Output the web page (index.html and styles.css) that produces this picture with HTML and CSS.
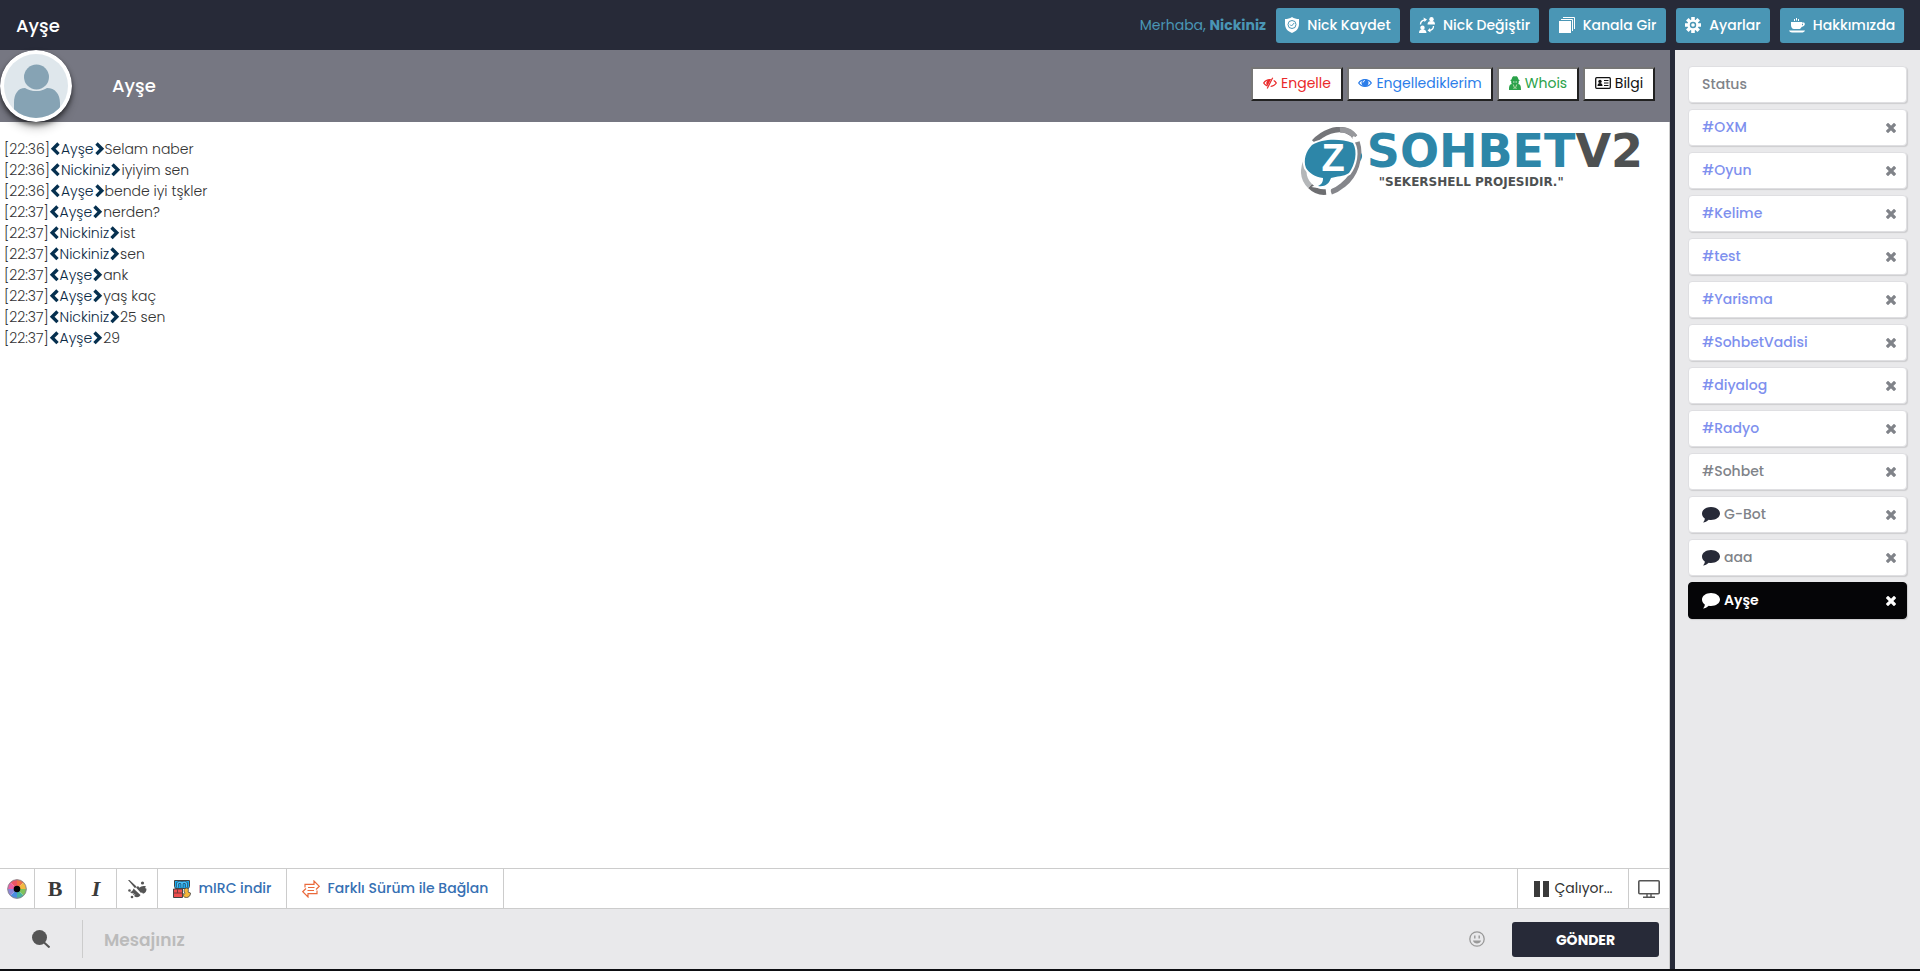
FILE: index.html
```html
<!DOCTYPE html>
<html lang="tr">
<head>
<meta charset="utf-8">
<title>Ayşe</title>
<link rel="stylesheet" href="styles.css">
</head>
<body>
<svg class="defs" aria-hidden="true">
  <symbol id="close" viewBox="0 0 10 10"><path d="M2 2l6 6M8 2l-6 6" stroke="currentColor" stroke-width="3.200" stroke-linecap="square" fill="none"/></symbol>
  <symbol id="bubble" viewBox="0 0 18 16"><path d="M9 0c5 0 9 2.900 9 6.500S14 13 9 13c-.8 0-1.500-.1-2.200-.2C5 14.500 3 15.300 1 15.500c1.300-1.300 1.800-2.500 1.800-4C1 10.300 0 8.500 0 6.500 0 2.900 4 0 9 0z" fill="currentColor"/></symbol>
  <symbol id="left" viewBox="0 0 11 14"><path d="M8.500 1.500l-5.300 5.300 5.300 5.300" stroke="currentColor" stroke-width="3.400" fill="none"/></symbol>
  <symbol id="right" viewBox="0 0 11 14"><path d="M2.500 1.500l5.300 5.300-5.300 5.300" stroke="currentColor" stroke-width="3.400" fill="none"/></symbol>
</svg>
<div class="app">
  <header class="topbar">
    <h1 class="topbar-title">Ayşe</h1>
    <p class="greeting">Merhaba, <b>Nickiniz</b></p>
    <nav class="topnav">
      <button class="nav-btn w-register"><svg width="14" height="16" viewBox="1 0 14 16"><path d="M8 0c2 1.500 4.500 2 7 2v5c0 4.500-3 7.500-7 9-4-1.500-7-4.500-7-9V2c2.500 0 5-.5 7-2z" fill="#fff"/><circle cx="8" cy="7.500" r="4" fill="none" stroke="#4a96b5"/><path d="M6 7.500l1.500 1.500 2.700-3" fill="none" stroke="#4a96b5"/></svg>Nick Kaydet</button>
      <button class="nav-btn w-change"><svg width="16" height="16" viewBox="0 0 16 16"><g fill="#fff"><circle cx="12.500" cy="2.200" r="2.200"/><path d="M8.500 7.500c0-2.500 1.500-3.500 4-3.500S16 5 16 7.500z"/><circle cx="3.500" cy="10.700" r="2.200"/><path d="M0 16c0-2.500 1-3.500 3.500-3.500S7.500 13.500 7.500 16zM4.500.5L8 2.500 5.500 5zM11.500 15.500L8.500 13.500 11 11z"/></g><path d="M1.500 7.500c0-2.500 1.500-4 4-4.500M14.500 9c0 2.500-1.500 4-4 4.500" fill="none" stroke="#fff" stroke-width="1.300"/></svg>Nick Değiştir</button>
      <button class="nav-btn w-join"><svg width="16" height="16" viewBox="0 0 16 16"><path d="M0 4h12v12H0z" fill="#fff"/><path d="M2 2.500h11.500V14M4 .5h11.500V12" fill="none" stroke="#fff"/></svg>Kanala Gir</button>
      <button class="nav-btn w-settings"><svg width="16" height="16" viewBox="0 0 16 16"><g stroke="#fff" stroke-width="3.600"><path d="M8 0v16M0 8h16M2.300 2.300l11.400 11.400M13.700 2.300L2.300 13.700"/></g><circle cx="8" cy="8" r="5.500" fill="#fff"/><circle cx="8" cy="8" r="2.500" fill="none" stroke="#4a96b5" stroke-width="1.400"/></svg>Ayarlar</button>
      <button class="nav-btn w-about"><svg width="16" height="16" viewBox="0 0 16 16"><path d="M2 5h11v.5h1.500c2 0 2 4-2 4.500C12 11.500 11 12 10 12H5C3 12 2 10 2 8zM0 13.500h16c-.5 1.500-2 2-3 2H3c-1.500 0-2.500-.7-3-2z" fill="#fff"/><path d="M5.500 4V2M7.500 3.500V1M9.500 4V2" stroke="#fff"/><path d="M13 6.700h1v1l-1 .8z" fill="#4a96b5"/></svg>Hakkımızda</button>
    </nav>
  </header>
  <div class="body">
    <main class="chat">
      <section class="profile">
        <svg class="avatar" viewBox="0 0 72 72"><defs><clipPath id="face"><circle cx="36" cy="36" r="32"/></clipPath></defs><circle cx="36" cy="36" r="36" fill="#fff"/><circle cx="36" cy="36" r="32" fill="#dfe7ec"/><g clip-path="url(#face)" fill="#86a3b4"><path d="M14 72V53c0-9 4-15 11-15 6 4 16 4 22 0 8 0 13 6 13 15v19z"/><circle cx="36.500" cy="27" r="14" fill="#dfe7ec"/><circle cx="36.500" cy="27" r="12.500"/></g></svg>
        <h2 class="profile-name">Ayşe</h2>
        <div class="actions">
          <button class="act red w-block"><svg width="14" height="12" viewBox="0 0 14 12"><path d="M.7 6C3.500 1.500 10.500 1.500 13.300 6 10.500 10.500 3.500 10.500.7 6z" fill="none" stroke="currentColor" stroke-width="1.300"/><path d="M7 2.800A3.200 3.200 0 0 0 5.500 9L9 3.200z" fill="currentColor"/><path d="M10.500.5L5 11.500" stroke="#fff" stroke-width="3"/><path d="M9.700.7L4.200 11.500" stroke="currentColor" stroke-width="1.200"/></svg>Engelle</button>
          <button class="act blue w-blocked"><svg width="14" height="12" viewBox="0 0 14 12"><path d="M.7 6C3.500 1.500 10.500 1.500 13.300 6 10.500 10.500 3.500 10.500.7 6z" fill="none" stroke="currentColor" stroke-width="1.300"/><circle cx="7" cy="5.700" r="3.500" fill="currentColor"/><path d="M5 5.500A2 2 0 0 1 7 3.500" fill="none" stroke="#fff" stroke-width=".9"/></svg>Engellediklerim</button>
          <button class="act green w-whois"><svg width="12" height="14" viewBox="0 0 12 14"><path d="M3 2C3.500.5 4.500 0 6 .5 7.500 0 8.500.5 9 2l.5 1.500 1.500.7-1.300.8c.3 1.500-.2 2.500-.5 3C11.500 8.500 12 10 12 14H0C0 10 .5 8.500 2.800 8c-.3-.5-.8-1.500-.5-3L1 4.200l1.500-.7z" fill="currentColor"/><path d="M4 6h1.500M6.500 6H8" stroke="#fff" stroke-width=".8"/><path d="M4.300 8.500L5.500 12l-1 1M7.700 8.500L6.500 12l1 1" fill="none" stroke="#d8e9c0" stroke-width=".8"/></svg>Whois</button>
          <button class="act black w-info"><svg width="16" height="12" viewBox="0 0 16 12"><rect x=".7" y=".7" width="14.600" height="10.600" rx="1" fill="none" stroke="currentColor" stroke-width="1.300"/><circle cx="5" cy="4.400" r="1.700" fill="currentColor"/><path d="M2.500 9c0-2 1-3 2.500-3s2.500 1 2.500 3z" fill="currentColor"/><path d="M9 3.500h4.500M9 6h4.500M9 8.500h4.500" stroke="currentColor" stroke-width="1.200"/></svg>Bilgi</button>
        </div>
      </section>
      <section class="log">
        <ul class="messages">
          <li>[22:36]<span class="nick"><svg><use href="#left"/></svg>Ayşe<svg><use href="#right"/></svg></span>Selam naber</li>
          <li>[22:36]<span class="nick"><svg><use href="#left"/></svg>Nickiniz<svg><use href="#right"/></svg></span>iyiyim sen</li>
          <li>[22:36]<span class="nick"><svg><use href="#left"/></svg>Ayşe<svg><use href="#right"/></svg></span>bende iyi tşkler</li>
          <li>[22:37]<span class="nick"><svg><use href="#left"/></svg>Ayşe<svg><use href="#right"/></svg></span>nerden?</li>
          <li>[22:37]<span class="nick"><svg><use href="#left"/></svg>Nickiniz<svg><use href="#right"/></svg></span>ist</li>
          <li>[22:37]<span class="nick"><svg><use href="#left"/></svg>Nickiniz<svg><use href="#right"/></svg></span>sen</li>
          <li>[22:37]<span class="nick"><svg><use href="#left"/></svg>Ayşe<svg><use href="#right"/></svg></span>ank</li>
          <li>[22:37]<span class="nick"><svg><use href="#left"/></svg>Ayşe<svg><use href="#right"/></svg></span>yaş kaç</li>
          <li>[22:37]<span class="nick"><svg><use href="#left"/></svg>Nickiniz<svg><use href="#right"/></svg></span>25 sen</li>
          <li>[22:37]<span class="nick"><svg><use href="#left"/></svg>Ayşe<svg><use href="#right"/></svg></span>29</li>
        </ul>
        <div class="logo">
          <svg class="logo-mark" width="62" height="68" viewBox="0 0 62 68">
            <g fill="none" stroke-width="5.500">
              <path d="M13 15C22 5 36 0 46 4q5 2 8 6" stroke="#747579"/>
              <path d="M39 3q10-1 15 7" stroke="#97989c"/>
              <path d="M56 15c5 15-2 34-14 43q-6 5-12 7" stroke="#85868b"/>
              <path d="M25 65q-9 1-16-6" stroke="#6d6e71"/>
              <path d="M9 59C2 52 1 44 5 34" stroke="#b4b7b9"/>
            </g>
            <path d="M52 10l4 4M27 67l3-8" stroke="#fff" stroke-width="2.500"/>
            <path d="M60 26c2 2 1 6-1 8z" fill="#2d86a8"/>
            <path d="M11 18c10-6 27-7 41-2 5 9 2 22-4 30-6 4-12 3-18 5-2 6-6 9-13 8 4-2 5-4 5-8-8-1-14-5-17-10-3-8 0-17 6-23z" fill="#2d86a8" stroke="#fff" stroke-width="4" paint-order="stroke"/>
            <text x="32" y="44" text-anchor="middle" class="logo-letter">Z</text>
          </svg>
          <div class="logo-words">
            <div class="logo-name">SOHBET<span>V2</span></div>
            <div class="logo-tag">"SEKERSHELL PROJESIDIR."</div>
          </div>
        </div>
      </section>
      <div class="toolbar">
        <button class="tool color" aria-label="Renk"><svg width="20" height="20" viewBox="0 0 20 20"><g stroke-width="7" fill="none"><circle cx="10" cy="10" r="6" stroke="#7ec25a" pathLength="8" stroke-dasharray="1 7"/><circle cx="10" cy="10" r="6" stroke="#47b39d" pathLength="8" stroke-dasharray="1 7" stroke-dashoffset="-1"/><circle cx="10" cy="10" r="6" stroke="#4b8ee0" pathLength="8" stroke-dasharray="1 7" stroke-dashoffset="-2"/><circle cx="10" cy="10" r="6" stroke="#8a86d8" pathLength="8" stroke-dasharray="1 7" stroke-dashoffset="-3"/><circle cx="10" cy="10" r="6" stroke="#ea5fa4" pathLength="8" stroke-dasharray="1 7" stroke-dashoffset="-4"/><circle cx="10" cy="10" r="6" stroke="#ec5565" pathLength="8" stroke-dasharray="1 7" stroke-dashoffset="-5"/><circle cx="10" cy="10" r="6" stroke="#ef7146" pathLength="8" stroke-dasharray="1 7" stroke-dashoffset="-6"/><circle cx="10" cy="10" r="6" stroke="#f3b93f" pathLength="8" stroke-dasharray="1 7" stroke-dashoffset="-7"/></g><circle cx="10" cy="10" r="9.300" fill="none" stroke="#8b8790"/><circle cx="10" cy="10" r="3.300" fill="#000"/></svg></button>
        <button class="tool letter"><b>B</b></button>
        <button class="tool letter"><b><i>I</i></b></button>
        <button class="tool" aria-label="Temizle"><svg width="20" height="20" viewBox="0 0 20 20"><g fill="#555"><path d="M1 1h1.500L9.500 7.500 8 9.300zM9 8.500l2-1.500 5 5.500-2 1.500zM6.500 9.500l7 6.500c-1.500 2.500-4 3-6.500 1l1.500-1.700-2.500.7.700-2-1.700.5-2-1.500c1.500 0 3-1.500 3.500-3.500zM12 9.500c2-2.500 4.500-3 7-2L18 9l1.500.7c0 2.500-1 4.500-3.500 5z"/><circle cx="15.500" cy="4" r="1.600"/><circle cx="2.500" cy="11.500" r="1.300"/><circle cx="5" cy="18" r="1.300"/></g></svg></button>
        <a class="tool link mirc" href="#"><svg width="18" height="18" viewBox="0 0 18 18"><path d="M1.500.5h15v6l-1 2h-13l-1-2z" fill="#18a9ec" stroke="#444"/><path d="M4.500 7.500V3.500Q6.800 1 9 3.500V7.500M9 3.500q2.300-2.500 4.500 0v4" fill="none" stroke="#2a4a66" stroke-width="2.800"/><path d="M4.500 7.500V3.500Q6.800 1 9 3.500V7.500M9 3.500q2.300-2.500 4.500 0v4" fill="none" stroke="#45c2fa" stroke-width="1.400"/><path d="M.5 9h9v8.500h-9z" fill="#f04f4f" stroke="#444"/><path d="M.5 13h9M4.500 9v4" fill="none" stroke="#7a3a3a"/><path d="M12 8.500c3-1.500 4 1 3 3.500l2.500 1c0 3-2 4.500-4 4.500-3 0-4-2-3.500-4 1 1 2 .5 2-.5-1.500-1-1-3.500 0-4.500z" fill="#f5b83c" stroke="#444" stroke-width=".8"/></svg>mIRC indir</a>
        <a class="tool link other" href="#"><svg width="18" height="18" viewBox="0 0 18 18"><path d="M3 7.500V4.300h9V1l5.300 5.300L14 9.500M12.500 7.500H6M15 10.500v3.200H6V17L.7 11.700 4 8.500M5.500 10.500H12" fill="none" stroke="#ea6a3c" stroke-width="1.200"/></svg>Farklı Sürüm ile Bağlan</a>
        <button class="tool playing"><svg width="17" height="16" viewBox="0 0 17 16"><path d="M1 0h6v16H1zM10 0h6v16h-6z" fill="#3a3a3a"/></svg>Çalıyor...</button>
        <button class="tool" aria-label="Ekran"><svg width="22" height="18" viewBox="0 0 22 18"><rect x=".8" y=".8" width="20.400" height="13" rx="1" fill="none" stroke="#555" stroke-width="1.600"/><path d="M9 14v3M13 14v3M5 17.200h12" stroke="#555" stroke-width="1.400"/></svg></button>
      </div>
      <form class="composer">
        <button type="button" class="search" aria-label="Ara"><svg width="18" height="18" viewBox="0 0 18 18"><circle cx="7.500" cy="7.500" r="7.500" fill="#555"/><path d="M11.500 12l6 5.500" stroke="#555" stroke-width="2"/></svg></button>
        <input class="message" type="text" placeholder="Mesajınız" aria-label="Mesajınız">
        <button type="button" class="smile" aria-label="İfadeler"><svg width="16" height="16" viewBox="0 0 16 16"><circle cx="8" cy="8" r="7.200" fill="none" stroke="#999" stroke-width="1.300"/><path d="M5.800 4.500v3M10.200 4.500v3" stroke="#999" stroke-width="1.400"/><path d="M4 9.500h8c-.5 4-7.500 4-8 0z" fill="#999"/></svg></button>
        <button type="button" class="send">GÖNDER</button>
      </form>
    </main>
    <aside class="sidebar">
      <div class="tab"><a href="#">Status</a></div>
      <div class="tab unread"><a href="#">#OXM</a><button aria-label="Kapat"><svg><use href="#close"/></svg></button></div>
      <div class="tab unread"><a href="#">#Oyun</a><button aria-label="Kapat"><svg><use href="#close"/></svg></button></div>
      <div class="tab unread"><a href="#">#Kelime</a><button aria-label="Kapat"><svg><use href="#close"/></svg></button></div>
      <div class="tab unread"><a href="#">#test</a><button aria-label="Kapat"><svg><use href="#close"/></svg></button></div>
      <div class="tab unread"><a href="#">#Yarisma</a><button aria-label="Kapat"><svg><use href="#close"/></svg></button></div>
      <div class="tab unread"><a href="#">#SohbetVadisi</a><button aria-label="Kapat"><svg><use href="#close"/></svg></button></div>
      <div class="tab unread"><a href="#">#diyalog</a><button aria-label="Kapat"><svg><use href="#close"/></svg></button></div>
      <div class="tab unread"><a href="#">#Radyo</a><button aria-label="Kapat"><svg><use href="#close"/></svg></button></div>
      <div class="tab"><a href="#">#Sohbet</a><button aria-label="Kapat"><svg><use href="#close"/></svg></button></div>
      <div class="tab"><svg class="bubble"><use href="#bubble"/></svg><a href="#">G-Bot</a><button aria-label="Kapat"><svg><use href="#close"/></svg></button></div>
      <div class="tab"><svg class="bubble"><use href="#bubble"/></svg><a href="#">aaa</a><button aria-label="Kapat"><svg><use href="#close"/></svg></button></div>
      <div class="tab active"><svg class="bubble"><use href="#bubble"/></svg><a href="#">Ayşe</a><button aria-label="Kapat"><svg><use href="#close"/></svg></button></div>
    </aside>
  </div>
</div>
</body>
</html>
```
FILE: styles.css
```css
* { box-sizing: border-box; }
body { margin: 0; font-family: Poppins, Inter, "Open Sans", sans-serif; font-size: 14px; color: #333; }
button, input { font: inherit; color: inherit; border: 0; background: none; padding: 0; margin: 0; }
a { color: inherit; text-decoration: none; }
h1, h2, p, ul { margin: 0; padding: 0; }
svg { flex: none; }
.defs { display: none; }
.app { display: flex; flex-direction: column; height: 100vh; border-bottom: 2px solid #0d0e12; }

.topbar { display: flex; align-items: center; height: 50px; flex: none; padding: 0 16px; background: #272a38; }
.topbar-title { flex: 1; font-size: 18px; font-weight: 500; color: #fff; }
.greeting { color: #4a96b5; margin-right: 10px; }
.greeting b { font-weight: 700; }
.topnav { display: flex; gap: 10px; }
.nav-btn { display: flex; align-items: center; justify-content: center; gap: 8px; height: 35px; padding: 0 8px; border-radius: 3px; background: #4a96b5; color: #fff; font-weight: 500; white-space: nowrap; }
.w-register, .w-about { min-width: 124px; }
.w-change { min-width: 129px; }
.w-join { min-width: 117px; }
.w-settings { min-width: 94px; }

.body { flex: 1; display: flex; min-height: 0; }
.chat { flex: 1; min-width: 0; display: flex; flex-direction: column; border-right: 1px solid #ccc; }

.profile { display: flex; align-items: center; height: 72px; flex: none; margin-right: -1px; background: #767782; padding-right: 15px; }
.avatar { width: 72px; height: 72px; border-radius: 50%; box-shadow: 0 3px 5px rgba(0,0,0,.6), 0 8px 8px rgba(0,0,0,.15); z-index: 1; }
.profile-name { flex: 1; margin-left: 40px; padding-bottom: 2px; font-size: 18px; font-weight: 500; color: #fff; }
.actions { display: flex; gap: 4px; padding-bottom: 4px; }
.act { display: flex; align-items: center; justify-content: center; gap: 4px; height: 34px; padding-bottom: 2px; border: 2px solid; border-color: #767676 #212121 #212121 #767676; background: #fff; font-weight: 400; }
.w-block { min-width: 92px; }
.w-blocked { min-width: 146px; }
.w-whois { min-width: 82px; }
.w-info { min-width: 72px; }
.red { color: #ea2a2a; }
.blue { color: #2b7de9; }
.green { color: #2ba24a; }
.black { color: #111; }

.log { flex: 1; min-height: 0; display: flex; justify-content: space-between; align-items: flex-start; padding: 5px 26px 0 4px; background: #fff; }
.messages { list-style: none; padding-top: 12px; font-size: 14px; font-weight: 300; line-height: 21px; }
.nick { color: #0b2a45; }
.nick svg { width: 11px; height: 14px; vertical-align: -2px; color: #06304f; }
.logo { display: flex; gap: 4px; }
.logo-letter { font: bold 38px "Liberation Sans", sans-serif; fill: #fff; }
.logo-words { font-family: "DejaVu Sans", sans-serif; font-weight: 700; white-space: nowrap; }
.logo-name { font-size: 46px; line-height: 48px; color: #2d86a8; }
.logo-name span { color: #4e5152; }
.logo-tag { padding-left: 12px; font-size: 12px; line-height: 14px; color: #4e5152; }

.toolbar { display: flex; flex: none; height: 41px; border: solid #ccc; border-width: 1px 0; background: #fff; }
.tool { display: flex; align-items: center; justify-content: center; width: 41px; border-right: 1px solid #ccc; white-space: nowrap; }
.tool:last-child { width: 40px; border-right: 0; }
.color { width: 35px; }
.letter { font-family: "Liberation Serif", serif; font-size: 22px; color: #3a3a3a; }
.link { gap: 8px; color: #3670b3; font-weight: 500; }
.mirc { width: 129px; }
.other { width: 217px; }
.playing { width: 112px; gap: 4px; margin-left: auto; border-left: 1px solid #ccc; }

.composer { display: flex; align-items: center; flex: none; height: 60px; padding-right: 10px; background: #e9e9eb; }
.search { display: flex; align-items: center; justify-content: center; width: 83px; height: 38px; border-right: 1px solid #ccc; }
.message { flex: 1; min-width: 0; height: 38px; padding: 2px 0 0 21px; font-size: 17px; font-weight: 600; outline: 0; }
.message::placeholder { color: #bbb; opacity: 1; }
.smile { display: flex; margin-right: 27px; }
.send { width: 147px; height: 35px; padding-top: 3px; border-radius: 3px; background: #272a38; color: #fff; font-weight: 700; }

.sidebar { display: flex; flex-direction: column; gap: 6px; width: 250px; flex: none; padding: 16px 13px; border-left: 5px solid #272a38; background: #e9e9eb; }
.tab { display: flex; align-items: center; gap: 4px; height: 37px; padding: 0 10px 0 13px; border: 1px solid #dfdfe2; border-radius: 4px; background: #fff; color: #808389; font-weight: 500; box-shadow: 1px 1px 1px rgba(0,0,0,.12); }
.tab a { flex: 1; }
.tab button { display: flex; }
.tab button svg { width: 10px; height: 10px; }
.unread a { color: #7e90ee; }
.bubble { width: 18px; height: 16px; color: #272a38; }
.active { background: #050507; border-color: #050507; color: #fff; font-weight: 600; }
.active .bubble { color: #fff; }
```
